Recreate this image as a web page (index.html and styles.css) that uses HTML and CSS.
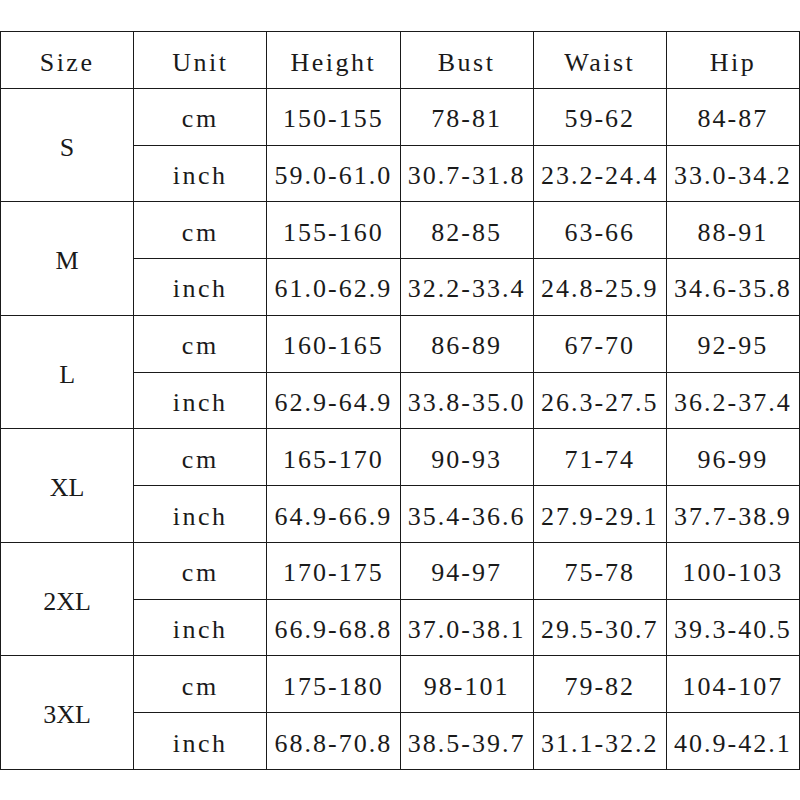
FILE: index.html
```html
<!DOCTYPE html>
<html>
<head>
<meta charset="utf-8">
<link rel="stylesheet" href="styles.css">
</head>
<body>
<div class="chart">
  <div class="cell word head">Size</div>
  <div class="cell word head">Unit</div>
  <div class="cell word head">Height</div>
  <div class="cell word head">Bust</div>
  <div class="cell word head">Waist</div>
  <div class="cell word head">Hip</div>

  <div class="cell size span2">S</div>
  <div class="cell word">cm</div><div class="cell num">150-155</div><div class="cell num">78-81</div><div class="cell num">59-62</div><div class="cell num">84-87</div>
  <div class="cell word">inch</div><div class="cell num">59.0-61.0</div><div class="cell num">30.7-31.8</div><div class="cell num">23.2-24.4</div><div class="cell num">33.0-34.2</div>

  <div class="cell size span2">M</div>
  <div class="cell word">cm</div><div class="cell num">155-160</div><div class="cell num">82-85</div><div class="cell num">63-66</div><div class="cell num">88-91</div>
  <div class="cell word">inch</div><div class="cell num">61.0-62.9</div><div class="cell num">32.2-33.4</div><div class="cell num">24.8-25.9</div><div class="cell num">34.6-35.8</div>

  <div class="cell size span2">L</div>
  <div class="cell word">cm</div><div class="cell num">160-165</div><div class="cell num">86-89</div><div class="cell num">67-70</div><div class="cell num">92-95</div>
  <div class="cell word">inch</div><div class="cell num">62.9-64.9</div><div class="cell num">33.8-35.0</div><div class="cell num">26.3-27.5</div><div class="cell num">36.2-37.4</div>

  <div class="cell size span2">XL</div>
  <div class="cell word">cm</div><div class="cell num">165-170</div><div class="cell num">90-93</div><div class="cell num">71-74</div><div class="cell num">96-99</div>
  <div class="cell word">inch</div><div class="cell num">64.9-66.9</div><div class="cell num">35.4-36.6</div><div class="cell num">27.9-29.1</div><div class="cell num">37.7-38.9</div>

  <div class="cell size span2">2XL</div>
  <div class="cell word">cm</div><div class="cell num">170-175</div><div class="cell num">94-97</div><div class="cell num">75-78</div><div class="cell num">100-103</div>
  <div class="cell word">inch</div><div class="cell num">66.9-68.8</div><div class="cell num">37.0-38.1</div><div class="cell num">29.5-30.7</div><div class="cell num">39.3-40.5</div>

  <div class="cell size span2">3XL</div>
  <div class="cell word">cm</div><div class="cell num">175-180</div><div class="cell num">98-101</div><div class="cell num">79-82</div><div class="cell num">104-107</div>
  <div class="cell word">inch</div><div class="cell num">68.8-70.8</div><div class="cell num">38.5-39.7</div><div class="cell num">31.1-32.2</div><div class="cell num">40.9-42.1</div>
</div>
</body>
</html>
```

FILE: styles.css
```css
html, body {
  margin: 0;
  padding: 0;
  background: #fff;
}
body {
  padding-top: 31px;
}
.chart {
  box-sizing: border-box;
  width: 800px;
  height: 739px;
  border: 1px solid #1a1a1a;
  background: #1a1a1a;
  display: grid;
  grid-template-columns: repeat(6, 1fr);
  grid-template-rows: repeat(13, 1fr);
  gap: 1px;
}
.cell {
  background: #fff;
  color: #1a1a1a;
  display: flex;
  align-items: center;
  justify-content: center;
  padding-top: 5px;
  box-sizing: border-box;
  font-family: "Liberation Serif", serif;
  font-size: 26px;
}
.word {
  letter-spacing: 2.5px;
}
.head {
  padding-top: 7px;
}
.num {
  letter-spacing: 2px;
}
.size {
  letter-spacing: 0;
}
.span2 {
  grid-row: span 2;
}
```
